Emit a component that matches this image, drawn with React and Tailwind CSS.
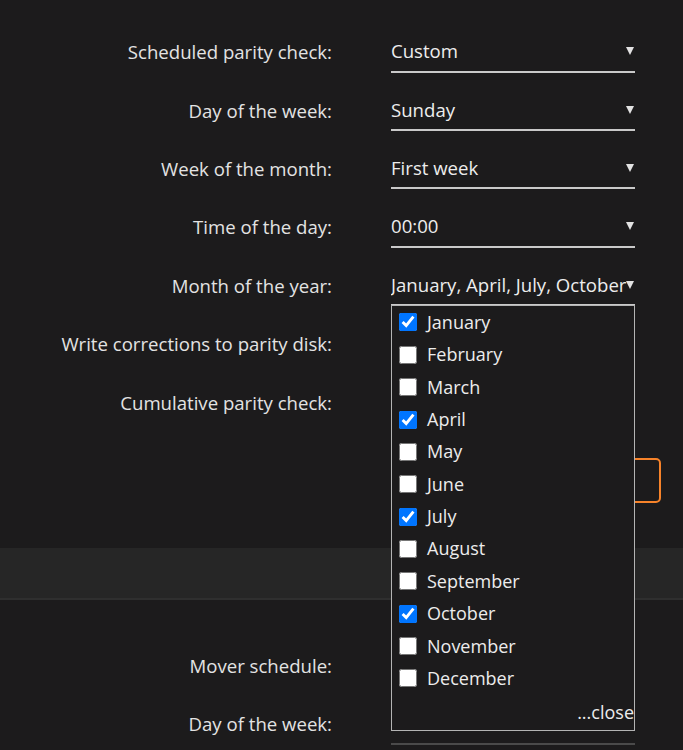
import { useState } from 'react';

const months = [
    'January', 'February', 'March', 'April', 'May', 'June',
    'July', 'August', 'September', 'October', 'November', 'December',
];

function Arrow() {
    return (
        <svg className="absolute right-[1px] top-1/2 -translate-y-1/2" width="8" height="9" viewBox="0 0 8 9">
            <path d="M0 0.5 H8 L4 8.5 Z" fill="#e2e2e2" />
        </svg>
    );
}

function Select({ value, dim, children }) {
    return (
        <div className={`relative h-[41px] w-[244px] flex items-center border-b-2 ${dim ? 'border-[#4a4a4a]' : 'border-[#c9c9c9]'}`}>
            <span className="block w-full overflow-hidden whitespace-nowrap text-[18.6px] text-[#ededed]">{value}</span>
            <Arrow />
            {children}
        </div>
    );
}

function Row({ label, children }) {
    return (
        <div className="h-[58.4px] flex items-center">
            <div className="w-[332px] text-right text-[18.6px] text-[#e3e3e3]">{label}</div>
            <div className="ml-[59px]">{children}</div>
        </div>
    );
}

function MonthPicker() {
    const [checked, setChecked] = useState(['January', 'April', 'July', 'October']);

    const toggle = (m) => {
        setChecked(checked.includes(m) ? checked.filter((x) => x !== m) : [...checked, m]);
    };

    return (
        <div className="absolute left-0 top-[40px] z-10 w-[244px] border border-[#b4b4b4] bg-[#1c1b1c] text-[18px]">
            {months.map((m) => (
                <label key={m} className="h-[32.36px] flex items-center pl-[7px] text-[#ececec]">
                    <input
                        type="checkbox"
                        checked={checked.includes(m)}
                        onChange={() => toggle(m)}
                        className="m-0 w-[18px] h-[18px] accent-[#0075ff]"
                    />
                    <span className="ml-[10px]">{m}</span>
                </label>
            ))}
            <div className="h-[35px] flex items-center justify-end text-[#ececec]">...close</div>
        </div>
    );
}

export default function App() {
    return (
        <div className="min-h-screen bg-[#1c1b1c] font-['Open_Sans',sans-serif] text-[18px] overflow-hidden">
            {/* Parity check settings */}
            <div className="pt-[23px]">
                <Row label="Scheduled parity check:"><Select value="Custom" /></Row>
                <Row label="Day of the week:"><Select value="Sunday" /></Row>
                <Row label="Week of the month:"><Select value="First week" /></Row>
                <Row label="Time of the day:"><Select value="00:00" /></Row>
                <Row label="Month of the year:">
                    <Select value="January, April, July, October">
                        <MonthPicker />
                    </Select>
                </Row>
                <Row label="Write corrections to parity disk:"><Select value="No" /></Row>
                <Row label="Cumulative parity check:"><Select value="No" /></Row>
            </div>

            {/* Buttons */}
            <div className="pt-[26px] pb-[45px] flex">
                <div className="ml-[540px] w-[121px] h-[45px] rounded-[5px] border-2 border-[#f7832a] flex items-center justify-center text-[#ededed]">
                    Apply
                </div>
            </div>

            {/* Section band */}
            <div className="h-[52px] bg-[#262626] border-b-2 border-[#2f2f2f]"></div>

            {/* Mover settings */}
            <div className="pt-[37px]">
                <Row label="Mover schedule:"><Select value="Daily" /></Row>
                <Row label="Day of the week:"><Select value="--------" dim /></Row>
            </div>
        </div>
    );
}
